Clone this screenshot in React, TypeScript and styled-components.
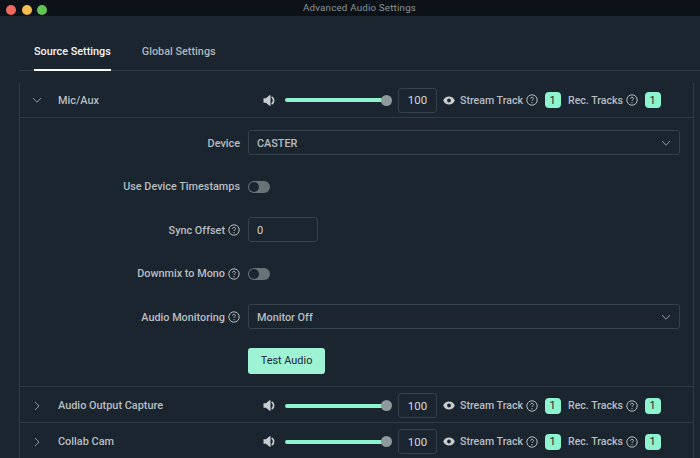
import styled, { createGlobalStyle } from "styled-components";

const GlobalStyle = createGlobalStyle`
  html, body { margin: 0; padding: 0; background: #1a2530; }
  body { font-family: Roboto, "Liberation Sans", sans-serif; overflow: hidden; }
`;

const SpeakerIcon = () => (
  <svg width="13" height="13" viewBox="0 0 13 13">
    <path d="M0.5 4.3h2.4L6.6 1.2c.4-.3.9 0 .9.4v9.8c0 .5-.5.7-.9.4L2.9 8.7H.5z" fill="#c9cdcf" />
    <path d="M9.2 3.4c1.9 1.6 1.9 4.6 0 6.2" stroke="#c9cdcf" strokeWidth="1.7" fill="none" strokeLinecap="round" />
  </svg>
);

const EyeIcon = () => (
  <svg width="12" height="9" viewBox="0 0 12 9">
    <path fillRule="evenodd" d="M6 .5c2.6 0 4.8 1.6 5.8 4-1 2.4-3.2 4-5.8 4S1.2 6.900.2 4.500C1.200 2.100 3.400.5 6 .5zM6 2.600a1.900 1.900 0 1 0 0 3.800 1.900 1.900 0 0 0 0-3.800z" fill="#c9cdcf" />
  </svg>
);

const HelpIcon = () => (
  <svg width="12" height="12" viewBox="0 0 12 12" fill="none" stroke="#b9bec1">
    <circle cx="6" cy="6" r="5.2" strokeWidth="1" />
    <path d="M4.500 4.700c0-.9.700-1.400 1.500-1.400s1.500.5 1.500 1.300c0 1.200-1.500 1.100-1.500 2.300" strokeWidth="1" />
    <circle cx="6" cy="8.700" r=".6" fill="#b9bec1" stroke="none" />
  </svg>
);

const Chevron = ({ open }: { open?: boolean }) => (
  <svg width="10" height="10" viewBox="0 0 10 10" fill="none" stroke="#8f9a9f" strokeWidth="1">
    <path d={open ? "M1 3l4 4.200L9 3" : "M3 1l4 4-4 4"} />
  </svg>
);

function SourceControls() {
  return (
    <Controls>
      <SpeakerIcon />
      <Slider>
        <SliderThumb />
      </Slider>
      <VolumeBox>100</VolumeBox>
      <EyeWrap><EyeIcon /></EyeWrap>
      <TrackLabel>Stream Track</TrackLabel>
      <HelpIcon />
      <Badge>1</Badge>
      <TrackLabel>Rec. Tracks</TrackLabel>
      <HelpIcon />
      <Badge>1</Badge>
    </Controls>
  );
}

export default function App() {
  return (
    <Window>
      <GlobalStyle />
      <TitleBar>
        <Lights>
          <Light color="#ee6a5f" />
          <Light color="#f5bd4f" />
          <Light color="#61c454" />
        </Lights>
        <WindowTitle>Advanced Audio Settings</WindowTitle>
      </TitleBar>

      <Tabs>
        <Tab active>Source Settings</Tab>
        <Tab>Global Settings</Tab>
      </Tabs>

      <SourceList>
        <SourceRow>
          <ChevronCell><Chevron open /></ChevronCell>
          <SourceName>Mic/Aux</SourceName>
          <SourceControls />
        </SourceRow>

        <Form>
          <FieldLabel>Device</FieldLabel>
          <SelectBox>CASTER<Chevron open /></SelectBox>

          <FieldLabel>Use Device Timestamps</FieldLabel>
          <FieldValue><Toggle /></FieldValue>

          <FieldLabel>Sync Offset <HelpIcon /></FieldLabel>
          <NumberBox>0</NumberBox>

          <FieldLabel>Downmix to Mono <HelpIcon /></FieldLabel>
          <FieldValue><Toggle /></FieldValue>

          <FieldLabel>Audio Monitoring <HelpIcon /></FieldLabel>
          <SelectBox>Monitor Off<Chevron open /></SelectBox>

          <span />
          <FieldValue><TestButton>Test Audio</TestButton></FieldValue>
        </Form>

        <SourceRow bordered>
          <ChevronCell><Chevron /></ChevronCell>
          <SourceName>Audio Output Capture</SourceName>
          <SourceControls />
        </SourceRow>
        <SourceRow bordered>
          <ChevronCell><Chevron /></ChevronCell>
          <SourceName>Collab Cam</SourceName>
          <SourceControls />
        </SourceRow>
      </SourceList>
    </Window>
  );
}

const Window = styled.div`
  width: 700px;
  height: 458px;
  overflow: hidden;
  background: #1a2530;
  color: #b9bec1;
  font-size: 11px;
`;

const TitleBar = styled.div`
  position: relative;
  height: 16px;
  box-sizing: border-box;
  padding: 0 0 2px 19px;
  background: #0c1217;
  display: flex;
  align-items: center;
  justify-content: center;
`;

const Lights = styled.div`
  position: absolute;
  left: 6px;
  top: 5px;
  display: flex;
  gap: 5.5px;
`;

const Light = styled.span<{ color: string }>`
  width: 10px;
  height: 10px;
  border-radius: 50%;
  background: ${(p) => p.color};
`;

const WindowTitle = styled.div`
  font-size: 9.75px;
  color: #8d9499;
  letter-spacing: 0.2px;
`;

const Tabs = styled.div`
  height: 54px;
  margin-left: 19px;
  padding-left: 15px;
  display: flex;
  gap: 31px;
  align-items: flex-end;
  border-bottom: 1px solid #2e3b44;
`;

const Tab = styled.div<{ active?: boolean }>`
  height: 26px;
  margin-bottom: -1px;
  line-height: 14px;
  font-weight: 500;
  font-size: 10.85px;
  color: ${(p) => (p.active ? "#f5f6f6" : "#b0b6b9")};
  border-bottom: 2px solid ${(p) => (p.active ? "#fff" : "transparent")};
  box-sizing: border-box;
`;

const SourceList = styled.div`
  margin: 12px 0 0 19px;
  width: 673px;
  border-left: 1px solid #2e3b44;
  border-right: 1px solid #2e3b44;
`;

const SourceRow = styled.div<{ bordered?: boolean }>`
  box-sizing: border-box;
  height: ${(p) => (p.bordered ? "36px" : "35px")};
  display: flex;
  align-items: center;
  ${(p) =>
    p.bordered
      ? "border-top: 1px solid #2e3b44; padding-top: 2px;"
      : "border-bottom: 1px solid #2e3b44;"}
`;

const ChevronCell = styled.div`
  width: 38px;
  padding-left: 12px;
  box-sizing: border-box;
  display: flex;
`;

const SourceName = styled.div`
  flex: 1;
  font-weight: 500;
  font-size: 10.9px;
`;

const Controls = styled.div`
  display: flex;
  align-items: center;
  width: 430px;
  flex: none;
  font-weight: 500;
`;

const Slider = styled.div`
  position: relative;
  width: 102px;
  height: 4px;
  margin: 0 11px 0 9px;
  border-radius: 2px;
  background: #8ef3cf;
`;

const SliderThumb = styled.span`
  position: absolute;
  right: -5px;
  top: -3.5px;
  width: 11px;
  height: 11px;
  border-radius: 50%;
  background: #8f999e;
`;

const VolumeBox = styled.div`
  width: 39px;
  height: 25px;
  box-sizing: border-box;
  border: 1px solid #33424c;
  border-radius: 3px;
  display: flex;
  align-items: center;
  justify-content: center;
  font-weight: 400;
  font-size: 11.5px;
  color: #d5d8da;
`;

const EyeWrap = styled.span`
  display: flex;
  margin: 0 5px 0 6px;
`;

const TrackLabel = styled.span`
  margin-right: 3px;
  font-size: 10.6px;
`;

const Badge = styled.span`
  width: 16px;
  height: 16px;
  margin: 0 7.5px 0 6.5px;
  border-radius: 4px;
  background: #8ef3cf;
  color: #1a2530;
  font-size: 11px;
  font-weight: 400;
  display: flex;
  align-items: center;
  justify-content: center;
`;

const Form = styled.div`
  display: grid;
  grid-template-columns: 220px 432px;
  column-gap: 8px;
  row-gap: 18.5px;
  padding: 12px 0 13.5px;
  grid-auto-rows: 25px;
`;

const FieldLabel = styled.div`
  display: flex;
  align-items: center;
  justify-content: flex-end;
  gap: 3px;
  padding-top: 1px;
  font-weight: 500;
  font-size: 10.85px;
`;

const FieldValue = styled.div`
  display: flex;
  align-items: center;
`;

const SelectBox = styled.div`
  height: 25px;
  box-sizing: border-box;
  border: 1px solid #33424c;
  border-radius: 3px;
  padding: 1px 8px 0;
  display: flex;
  align-items: center;
  justify-content: space-between;
  font-weight: 500;
  font-size: 10.85px;
`;

const NumberBox = styled.div`
  width: 70px;
  height: 25px;
  box-sizing: border-box;
  border: 1px solid #33424c;
  border-radius: 3px;
  padding: 1px 0 0 8px;
  display: flex;
  align-items: center;
  color: #d5d8da;
`;

const Toggle = styled.span`
  position: relative;
  width: 22px;
  height: 12px;
  margin-top: 2px;
  border-radius: 6px;
  background: #687277;
  &::before {
    content: "";
    position: absolute;
    left: 1px;
    top: 1px;
    width: 10px;
    height: 10px;
    border-radius: 50%;
    background: #1a2530;
  }
`;

const TestButton = styled.button`
  width: 77px;
  height: 26px;
  margin-top: 1px;
  border: none;
  border-radius: 3px;
  background: #9ff3d5;
  color: #1a2530;
  font-family: inherit;
  font-size: 10.9px;
  font-weight: 400;
  padding: 0;
`;
